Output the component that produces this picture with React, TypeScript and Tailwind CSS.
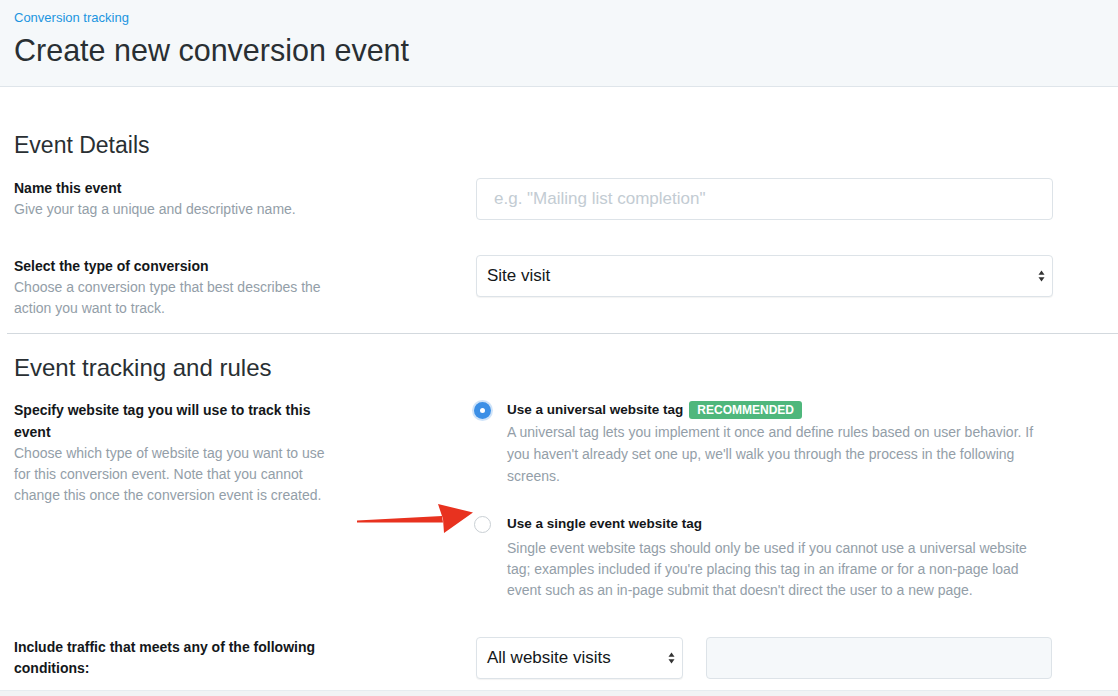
import React from "react";

const font = { fontFamily: '"Liberation Sans", Arial, sans-serif' };

function SelectArrows() {
  return (
    <svg width="7" height="12" viewBox="0 0 7 12" className="shrink-0">
      <path d="M3.5 0.5 L6.5 4.8 L0.5 4.8 Z" fill="#333" />
      <path d="M3.5 11.5 L6.5 7.2 L0.5 7.2 Z" fill="#333" />
    </svg>
  );
}

function Radio({ checked }: { checked: boolean }) {
  return checked ? (
    <span className="mt-[3px] flex h-[17px] w-[17px] shrink-0 items-center justify-center rounded-full bg-[#3b8fe6] shadow-[0_0_0_2px_rgba(59,143,230,0.25)]">
      <span className="h-[5px] w-[5px] rounded-full bg-white" />
    </span>
  ) : (
    <span className="mt-[3px] h-[17px] w-[17px] shrink-0 rounded-full border border-[#c9cfd4] bg-white" />
  );
}

function Arrow() {
  return (
    <svg
      className="pointer-events-none absolute left-[-118px] top-[-10px]"
      width="120"
      height="34"
      viewBox="0 0 120 34"
    >
      <path d="M1 17.6 L86 13 L87 19.4 L1 19.4 Z" fill="#e8321f" />
      <path d="M82 1 L117 9.5 L88 30 L87 16 Z" fill="#e8321f" />
    </svg>
  );
}

export default function App() {
  return (
    <div className="relative h-[696px] w-[1118px] overflow-hidden bg-white text-[#14171a]" style={font}>
      <header className="h-[87px] border-b border-[#dfe5ea] bg-[#f5f8fa] pl-[14px]">
        <div className="pt-[9px] text-[13px] leading-[18px] text-[#1b95e0]">Conversion tracking</div>
        <h1 className="mt-[5px] text-[30.5px] font-light leading-[36px] text-[#292f33]">
          Create new conversion event
        </h1>
      </header>

      <h2 className="ml-[14px] mt-[44px] text-[23px] font-light leading-[28px] text-[#292f33]">Event Details</h2>

      <div className="mt-[19px] flex">
        <div className="w-[476px] shrink-0 pl-[14px]">
          <div className="text-[14px] font-bold leading-[20px]">Name this event</div>
          <div className="text-[14px] leading-[22px] text-[#939ea8]">Give your tag a unique and descriptive name.</div>
        </div>
        <div className="flex h-[42px] w-[577px] items-center rounded-[4px] border border-[#dde3e8] bg-white pl-[17px] text-[17px] text-[#c3ccd3]">
          e.g. "Mailing list completion"
        </div>
      </div>

      <div className="mt-[35px] flex">
        <div className="w-[476px] shrink-0 pl-[14px]">
          <div className="text-[14px] font-bold leading-[22px]">Select the type of conversion</div>
          <div className="w-[330px] text-[14px] leading-[21px] text-[#939ea8]">
            Choose a conversion type that best describes the action you want to track.
          </div>
        </div>
        <div className="flex h-[42px] w-[577px] items-center justify-between rounded-[4px] border border-[#dde3e8] bg-white pl-[10px] pr-[7px] text-[17px] text-[#14171a] shadow-[0_1px_1px_rgba(0,0,0,0.05)]">
          <span>Site visit</span>
          <SelectArrows />
        </div>
      </div>

      <div className="ml-[7px] mt-[14px] border-t border-[#d3d9de]" />

      <h2 className="ml-[14px] mt-[20px] text-[24px] font-light leading-[28px] text-[#292f33]">
        Event tracking and rules
      </h2>

      <div className="mt-[17px] flex">
        <div className="w-[476px] shrink-0 pl-[14px]">
          <div className="w-[326px] text-[14px] font-bold leading-[22px]">
            Specify website tag you will use to track this event
          </div>
          <div className="w-[330px] text-[14px] leading-[21px] text-[#939ea8]">
            Choose which type of website tag you want to use for this conversion event. Note that you cannot
            change this once the conversion event is created.
          </div>
        </div>
        <div className="w-[577px]">
          <div className="ml-[-2px] flex gap-[16px]">
            <Radio checked />
            <div>
              <div className="flex items-center text-[13.5px] font-bold leading-[22px]">
                Use a universal website tag
                <span className="ml-[6px] rounded-[3px] bg-[#4fb77c] px-[8px] text-[12px] font-bold leading-[18px] text-white">
                  RECOMMENDED
                </span>
              </div>
              <div className="w-[535px] text-[14px] leading-[22px] text-[#939ea8]">
                A universal tag lets you implement it once and define rules based on user behavior. If you haven't
                already set one up, we'll walk you through the process in the following screens.
              </div>
            </div>
          </div>

          <div className="relative ml-[-2px] mt-[26px] flex gap-[16px]">
            <Arrow />
            <Radio checked={false} />
            <div>
              <div className="text-[13.5px] font-bold leading-[22px]">Use a single event website tag</div>
              <div className="mt-[3px] w-[535px] text-[14px] leading-[21px] text-[#939ea8]">
                Single event website tags should only be used if you cannot use a universal website tag; examples
                included if you're placing this tag in an iframe or for a non-page load event such as an in-page
                submit that doesn't direct the user to a new page.
              </div>
            </div>
          </div>
        </div>
      </div>

      <div className="mt-[36px] flex">
        <div className="w-[476px] shrink-0 pl-[14px]">
          <div className="w-[330px] text-[14px] font-bold leading-[21px]">
            Include traffic that meets any of the following conditions:
          </div>
        </div>
        <div className="flex gap-[23px]">
          <div className="flex h-[42px] w-[207px] items-center justify-between rounded-[4px] border border-[#dde3e8] bg-white pl-[10px] pr-[7px] text-[17px] shadow-[0_1px_1px_rgba(0,0,0,0.05)]">
            <span>All website visits</span>
            <SelectArrows />
          </div>
          <div className="h-[42px] w-[346px] rounded-[4px] border border-[#dde3e8] bg-[#f5f8fa]" />
        </div>
      </div>

      <div className="mt-[11px] h-[10px] border-t border-[#e6ecf0] bg-[#f1f3f5]" />
    </div>
  );
}
